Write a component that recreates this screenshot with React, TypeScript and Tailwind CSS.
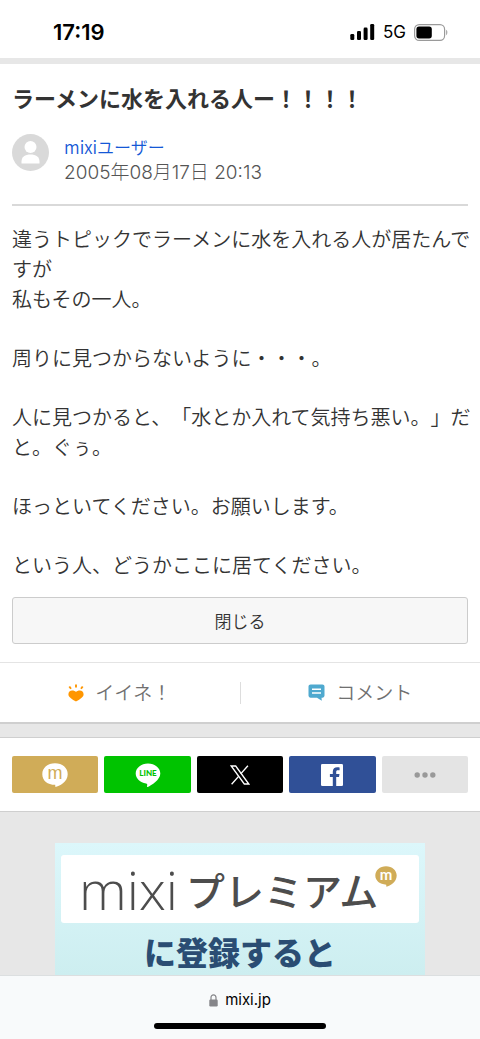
import React from "react";

function SignalIcon() {
  return (
    <svg width="25" height="16" viewBox="0 0 25 16" fill="#000" aria-hidden="true">
      <rect x="0.3" y="10" width="4" height="6" rx="1.3" />
      <rect x="7" y="7" width="4" height="9" rx="1.3" />
      <rect x="13.6" y="3.6" width="4" height="12.4" rx="1.3" />
      <rect x="20.2" y="0" width="4" height="16" rx="1.3" />
    </svg>
  );
}

function BatteryIcon() {
  return (
    <svg width="34" height="17" viewBox="0 0 34 17" aria-hidden="true">
      <rect x="0.6" y="0.6" width="30" height="15.8" rx="4.6" fill="#fff" stroke="#9a9a9a" strokeWidth="1.2" />
      <rect x="2.4" y="2.6" width="15.4" height="11.8" rx="2.6" fill="#000" />
      <path d="M32.2 5.8c1.5.8 1.5 4.6 0 5.4z" fill="#9a9a9a" />
    </svg>
  );
}

function Avatar() {
  return (
    <svg className="shrink-0" width="37" height="37" viewBox="0 0 37 37" role="img" aria-label="mixiユーザー">
      <circle cx="18.5" cy="18.5" r="18.5" fill="#d9d9d9" />
      <circle cx="18.5" cy="13" r="6" fill="#fff" />
      <path d="M9.5 29.6v-1.9c0-4.6 3.6-7.1 9-7.1s9 2.5 9 7.1v1.9z" fill="#fff" />
    </svg>
  );
}

function LikeIcon() {
  return (
    <svg width="16" height="18" viewBox="0 0 16 18" aria-hidden="true">
      <path
        d="M8 17.4C6.400 16.800.4 13.600.4 10.600.4 8.200 2 6.600 4.200 6.600c1.600 0 2.900.5 3.800 1.500.9-1 2.200-1.500 3.800-1.500 2.200 0 3.800 1.600 3.800 4 0 3-6 6.200-7.600 6.800z"
        fill="#ff9600"
      />
      <path d="M1.300 2.500l1.700 2.300M8 .4v3.200M14.700 2.500l-1.700 2.300" stroke="#ff9600" strokeWidth="1.900" fill="none" />
    </svg>
  );
}

function CommentIcon() {
  return (
    <svg width="17" height="17" viewBox="0 0 17 17" aria-hidden="true">
      <path
        d="M2.600.5h11.800c1.200 0 2.100.9 2.100 2.100v9c0 1.200-.9 2.100-2.100 2.100h-.9l.3 3-4.800-3H2.600c-1.200 0-2.100-.9-2.100-2.100v-9C.5 1.400 1.400.5 2.600.5z"
        fill="#4fa9cf"
      />
      <path d="M4 5.200h9M4 9h9" stroke="#fff" strokeWidth="1.500" />
    </svg>
  );
}

function MixiBubble() {
  return (
    <svg width="26" height="24" viewBox="0 0 26 24" aria-hidden="true">
      <path d="M13 .3C5.700.3.3 4.800.3 11.200s5.200 10.500 12.900 10.600l.2 2.200c3.800-.8 12.300-5 12.300-12.800C25.700 4.800 20.300.3 13 .3z" fill="#fff" />
      <text x="13" y="16" textAnchor="middle" fontFamily="'Liberation Sans', sans-serif" fontSize="18" fill="#d0ac58">
        m
      </text>
    </svg>
  );
}

function LineBubble() {
  return (
    <svg width="26" height="24" viewBox="0 0 26 24" aria-hidden="true">
      <path d="M13 .5C6.100.5.700 5 .7 10.500c0 5 4.400 9.100 10.400 9.900 1.500.3 1.200 1 .9 3.200 0 .4.3.5.8.3 3.500-1.600 12.500-6.900 12.500-13.400C25.300 5 19.900.5 13 .5z" fill="#fff" />
      <text x="13" y="13.300" textAnchor="middle" fontFamily="Lato, sans-serif" fontSize="8" fontWeight="900" fill="#00c300">
        LINE
      </text>
    </svg>
  );
}

function XLogo() {
  return (
    <svg width="20" height="20" viewBox="0 0 20 20" aria-hidden="true">
      <path d="M1.200 1h4.500l13.100 18h-4.500z" fill="none" stroke="#fff" strokeWidth="1.300" />
      <path d="M17.900.8l-7.200 8.100M8.600 11.400L1.600 19.200" fill="none" stroke="#fff" strokeWidth="1.400" />
    </svg>
  );
}

function FacebookLogo() {
  return (
    <svg width="22" height="22" viewBox="0 0 22 22" aria-hidden="true">
      <rect width="22" height="22" rx="1.300" fill="#fff" />
      <path
        d="M11.800 22v-9.100H8.900V10h2.900V7.500c0-2.900 1.800-4.300 4.500-4.300.9 0 1.700.1 2.300.2v2.900h-1.700c-1.300 0-1.700.7-1.700 1.600V10h3.300l-.5 2.900h-2.800V22z"
        fill="#305097"
      />
    </svg>
  );
}

function DotsIcon() {
  return (
    <svg width="22" height="6" viewBox="0 0 22 6" fill="#999" aria-hidden="true">
      <circle cx="3.200" cy="3" r="2.700" />
      <circle cx="11" cy="3" r="2.700" />
      <circle cx="18.800" cy="3" r="2.700" />
    </svg>
  );
}

function PremiumBadge() {
  return (
    <svg className="absolute right-[22px] top-[11px]" width="22" height="21" viewBox="0 0 22 21" aria-hidden="true">
      <path d="M11 .3C4.900.3.3 4.400.3 9.600s4.500 8.900 10.900 9.100l.2 2c3.800-.8 10.300-4.500 10.300-11.100C21.700 4.400 17.100.3 11 .3z" fill="#d0ac58" />
      <text x="11" y="13.500" textAnchor="middle" fontFamily="Lato, sans-serif" fontSize="15" fontWeight="700" fill="#fff">
        m
      </text>
    </svg>
  );
}

function LockIcon() {
  return (
    <svg width="9" height="13" viewBox="0 0 9 13" aria-hidden="true">
      <path d="M2 6V3.600C2 2 3 .9 4.500.9S7 2 7 3.600V6" fill="none" stroke="#858589" strokeWidth="1.200" />
      <rect x="0.300" y="5.500" width="8.400" height="7" rx="1.200" fill="#858589" />
    </svg>
  );
}

const shares = [
  { label: "mixi", color: "bg-[#d0ac58]", icon: <MixiBubble /> },
  { label: "LINE", color: "bg-[#00c300]", icon: <LineBubble /> },
  { label: "X", color: "bg-black", icon: <XLogo /> },
  { label: "Facebook", color: "bg-[#305097]", icon: <FacebookLogo /> },
  { label: "その他", color: "bg-[#e4e4e4]", icon: <DotsIcon /> },
];

export default function App() {
  return (
    <div className="flex min-h-screen flex-col bg-[#e7e7e7] font-['Noto_Sans_CJK_JP',sans-serif] text-[#333] [text-spacing-trim:space-all]">
      <header className="flex h-[58px] items-center justify-between bg-white pl-[53px] pr-8 pt-[6px] font-[Inter,sans-serif] text-black">
        <span className="text-[22px] font-semibold leading-6">17:19</span>
        <div className="flex items-center gap-2">
          <SignalIcon />
          <span className="text-[17px] leading-5">5G</span>
          <BatteryIcon />
        </div>
      </header>

      <main className="mt-[6px] flex flex-1 flex-col">
        <article className="border-b-2 border-[#cfcfcf] bg-white">
          <div className="px-3 pt-[18px]">
            <h1 className="text-[22px] font-bold leading-[30px]">ラーメンに水を入れる人ー！！！！</h1>
            <div className="mt-[22px] flex gap-[15px] border-b-2 border-[#d9d9d9] pb-[18px]">
              <Avatar />
              <div className="flex flex-col items-start leading-[26px]">
                <a href="#user" className="text-[17px] font-[350] text-[#1558d6]">mixiユーザー</a>
                <time dateTime="2005-08-17T20:13" className="font-[Inter,'Noto_Sans_CJK_JP',sans-serif] text-[19px] font-light text-[#555]">
                  2005年08月17日 20:13
                </time>
              </div>
            </div>
          </div>

          <div className="flex flex-col gap-[29px] pb-[17px] pl-3 pr-2 pt-[18px] text-[20px] font-[350] leading-[30px]">
            <p>
              違うトピックでラーメンに水を入れる人が居たんですが
              <br />
              私もその一人。
            </p>
            <p>周りに見つからないように・・・。</p>
            <p>人に見つかると、「水とか入れて気持ち悪い。」だと。ぐぅ。</p>
            <p>ほっといてください。お願いします。</p>
            <p>という人、どうかここに居てください。</p>
          </div>

          <div className="px-3 pb-[18px]">
            <button type="button" className="block h-[47px] w-full rounded-[3px] border border-[#ccc] bg-[#f7f7f7] text-[17px] font-[350]">
              閉じる
            </button>
          </div>

          <div className="flex h-[60px] items-center border-t border-[#e4e4e4] text-[19px] font-[350] text-[#707070]">
            <button type="button" className="flex flex-1 items-center justify-center gap-[11px]">
              <LikeIcon />
              <span>イイネ！</span>
            </button>
            <span className="h-[22px] w-px bg-[#ddd]" />
            <button type="button" className="flex flex-1 items-center justify-center gap-[11px]">
              <CommentIcon />
              <span>コメント</span>
            </button>
          </div>
        </article>

        <section aria-label="シェア" className="mt-[13px] grid grid-cols-5 gap-[6px] border-y border-[#cfcfcf] bg-white px-3 py-[18px]">
          {shares.map((s) => (
            <button
              key={s.label}
              type="button"
              aria-label={s.label}
              className={`flex h-[37px] items-center justify-center rounded-[2px] ${s.color}`}
            >
              {s.icon}
            </button>
          ))}
        </section>

        <aside className="flex flex-1 justify-center px-[55px] pt-[31px]">
          <a href="#premium" className="flex w-full flex-col items-center bg-linear-to-b from-[#dcf7fb] to-[#cdeef0] px-[6px] pt-3">
            <span className="relative flex h-[68px] w-full items-center rounded-[3px] bg-white pl-[18px] text-[#4d4d4d]">
              <span className="font-['Open_Sans',sans-serif] text-[54px] font-light leading-[64px]">mixi</span>
              <span className="pl-2 text-[39px] font-medium leading-[68px]">プレミアム</span>
              <PremiumBadge />
            </span>
            <span className="mt-1 text-[32px] font-black leading-[48px] text-[#2a4d73]">に登録すると</span>
          </a>
        </aside>
      </main>

      <footer className="sticky bottom-0 flex h-16 flex-col items-center justify-between border-t border-[#dcdfe0] bg-[#f8fafb] pb-[10px] pt-[14px]">
        <div className="flex items-center gap-[7px]">
          <LockIcon />
          <span className="font-[Inter,sans-serif] text-[15px] leading-5 text-black">mixi.jp</span>
        </div>
        <span className="h-[6px] w-[172px] rounded-full bg-black" />
      </footer>
    </div>
  );
}
